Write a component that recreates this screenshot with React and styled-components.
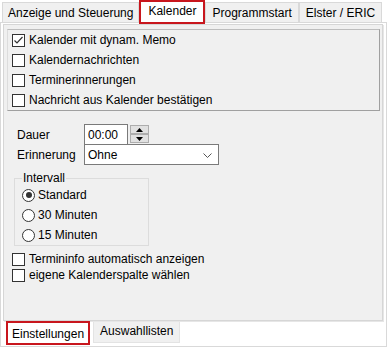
import React from "react";
import styled, { createGlobalStyle } from "styled-components";

const GlobalStyle = createGlobalStyle`
  html, body {
    margin: 0;
    padding: 0;
    background: #ffffff;
  }
  * {
    box-sizing: border-box;
  }
`;

const Page = styled.div`
  width: 389px;
  height: 348px;
  background: #ffffff;
  display: flex;
  flex-direction: column;
  font-family: "Liberation Sans", Arial, sans-serif;
  font-size: 12px;
  color: #000;
`;

const TopTabs = styled.div`
  display: flex;
  align-items: flex-end;
  height: 22px;
  padding-left: 2px;
  position: relative;
  z-index: 2;
`;

const Tab = styled.div`
  display: flex;
  align-items: center;
  height: ${(p) => (p.$active ? "24px" : "20px")};
  margin-bottom: ${(p) => (p.$active ? "-2px" : "0")};
  padding: ${(p) => (p.$active ? "0 7px 2px 7px" : `0 ${p.$pad || 5}px`)};
  background: ${(p) => (p.$active ? "#ffffff" : "#f0f0f0")};
  border: ${(p) => (p.$active ? "2px solid #c8161d" : "1px solid #d9d9d9")};
  border-bottom: ${(p) => (p.$active ? "2px solid #c8161d" : "none")};
  white-space: nowrap;
`;

const TabPage = styled.div`
  width: 387px;
  height: 325px;
  border: 1px solid #d9d9d9;
  background: #ffffff;
  padding: 1px 3px 0 2px;
  display: flex;
  flex-direction: column;
`;

const Panel = styled.div`
  height: 297px;
  flex: none;
  background: #f0f0f0;
  border: 1px solid #d6d6d6;
  box-shadow: 1px 1px 0 #e6e6e6;
  padding: 4px 2px 0 3px;
  display: flex;
  flex-direction: column;
`;

const CheckGroup = styled.div`
  display: flex;
  flex-direction: column;
  border-top: 1px solid #bdbdbd;
  border-left: 1px solid #dcdcdc;
  border-right: 1px solid #a0a0a0;
  border-bottom: 1px solid #a0a0a0;
  padding-left: 4px;
`;

const CheckRow = styled.label`
  display: flex;
  align-items: center;
  gap: 4px;
  height: ${(p) => p.$h || 20}px;
`;

const Box = styled.span`
  width: 13px;
  height: 13px;
  flex: none;
  border: 1px solid #333;
  background: #fff;
  display: flex;
  align-items: center;
  justify-content: center;
`;

const Form = styled.div`
  display: flex;
  flex-direction: column;
  padding-left: 10px;
  margin-top: 13px;
`;

const FieldRow = styled.div`
  display: flex;
  align-items: center;
  height: 21px;
  margin-top: ${(p) => (p.$overlap ? "-1px" : "0")};
`;

const FieldLabel = styled.span`
  width: 67px;
  flex: none;
`;

const Input = styled.div`
  width: ${(p) => p.$w}px;
  height: 21px;
  border: 1px solid #7a7a7a;
  background: #fff;
  display: flex;
  align-items: center;
  justify-content: space-between;
  padding: 1px 6px 0 3px;
`;

const Spinner = styled.div`
  display: flex;
  flex-direction: column;
  align-self: flex-start;
  margin: 1px 0 0 2px;
`;

const SpinButton = styled.div`
  width: 19px;
  height: 9px;
  background: #e1e1e1;
  border: 1px solid #adadad;
  display: flex;
  align-items: center;
  justify-content: center;
`;

const Fieldset = styled.fieldset`
  width: 135px;
  margin: 6px 0 0 -3px;
  padding: 0 0 0 7px;
  border: 1px solid #dcdcdc;
  min-width: 0;
`;

const Legend = styled.legend`
  padding: 0 1px;
  line-height: 14px;
`;

const RadioRow = styled.label`
  display: flex;
  align-items: center;
  gap: 3px;
  height: 20px;
`;

const Circle = styled.span`
  width: 13px;
  height: 13px;
  flex: none;
  border-radius: 50%;
  border: 1px solid #333;
  background: #fff;
  display: flex;
  align-items: center;
  justify-content: center;

  &::after {
    content: "";
    width: 6px;
    height: 6px;
    border-radius: 50%;
    background: ${(p) => (p.$on ? "#333" : "transparent")};
  }
`;

const LowerChecks = styled.div`
  display: flex;
  flex-direction: column;
  margin: 5px 0 0 -5px;
`;

const BottomTabs = styled.div`
  display: flex;
  align-items: flex-start;
  padding-left: 3px;
`;

const BottomTab = styled.div`
  display: flex;
  align-items: center;
  height: ${(p) => (p.$active ? "24px" : "21px")};
  margin-top: ${(p) => (p.$active ? "0" : "1px")};
  margin-left: ${(p) => (p.$active ? "0" : "3px")};
  padding: ${(p) => (p.$active ? "1px 4px 0 4px" : "0 6px 2px 6px")};
  background: ${(p) => (p.$active ? "#ffffff" : "#f0f0f0")};
  border: ${(p) => (p.$active ? "2px solid #c8161d" : "1px solid #e3e3e3")};
  border-top: ${(p) => (p.$active ? "2px solid #c8161d" : "none")};
  white-space: nowrap;
`;

const Check = () => (
  <svg width="11" height="11" viewBox="0 0 11 11">
    <polyline points="1.5,5.5 4,8 9.5,2" fill="none" stroke="#333" strokeWidth="1.2" />
  </svg>
);

const Checkbox = ({ checked, label, h }) => (
  <CheckRow $h={h}>
    <Box>{checked && <Check />}</Box>
    {label}
  </CheckRow>
);

const Radio = ({ on, label }) => (
  <RadioRow>
    <Circle $on={on} />
    {label}
  </RadioRow>
);

const Triangle = ({ down }) => (
  <svg width="7" height="4" viewBox="0 0 7 4">
    <polygon points={down ? "0,0 7,0 3.5,4" : "0,4 7,4 3.5,0"} fill="#000" />
  </svg>
);

const Chevron = () => (
  <svg width="9" height="5" viewBox="0 0 9 5">
    <polyline points="0.5,0.5 4.5,4.5 8.5,0.5" fill="none" stroke="#555" strokeWidth="1" />
  </svg>
);

export default function App() {
  return (
    <Page>
      <GlobalStyle />
      <TopTabs>
        <Tab>Anzeige und Steuerung</Tab>
        <Tab $active>Kalender</Tab>
        <Tab $pad={6}>Programmstart</Tab>
        <Tab $pad={6}>Elster / ERIC</Tab>
      </TopTabs>
      <TabPage>
        <Panel>
          <CheckGroup>
            <Checkbox checked label="Kalender mit dynam. Memo" />
            <Checkbox label="Kalendernachrichten" />
            <Checkbox label="Terminerinnerungen" />
            <Checkbox label="Nachricht aus Kalender bestätigen" />
          </CheckGroup>
          <Form>
            <FieldRow>
              <FieldLabel>Dauer</FieldLabel>
              <Input $w={44}>00:00</Input>
              <Spinner>
                <SpinButton>
                  <Triangle />
                </SpinButton>
                <SpinButton>
                  <Triangle down />
                </SpinButton>
              </Spinner>
            </FieldRow>
            <FieldRow $overlap>
              <FieldLabel>Erinnerung</FieldLabel>
              <Input $w={135}>
                Ohne
                <Chevron />
              </Input>
            </FieldRow>
            <Fieldset>
              <Legend>Intervall</Legend>
              <Radio on label="Standard" />
              <Radio label="30 Minuten" />
              <Radio label="15 Minuten" />
            </Fieldset>
            <LowerChecks>
              <Checkbox h={16} label="Termininfo automatisch anzeigen" />
              <Checkbox h={16} label="eigene Kalenderspalte wählen" />
            </LowerChecks>
          </Form>
        </Panel>
        <BottomTabs>
          <BottomTab $active>Einstellungen</BottomTab>
          <BottomTab>Auswahllisten</BottomTab>
        </BottomTabs>
      </TabPage>
    </Page>
  );
}
